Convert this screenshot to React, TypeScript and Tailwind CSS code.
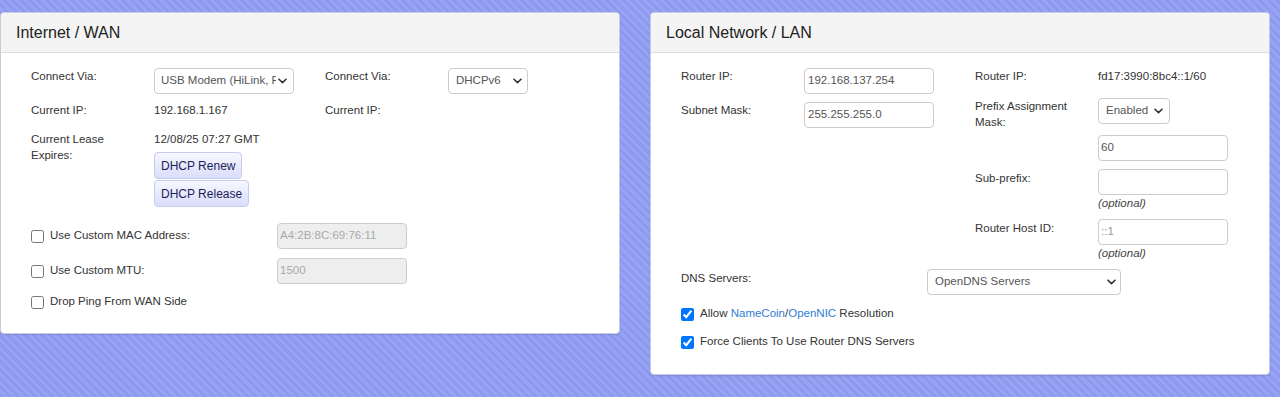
import React from 'react'

const font = "font-['Liberation_Sans',Arial,sans-serif]"

const Chevron: React.FC = () => (
  <svg width="9" height="6" viewBox="0 0 9 6" className="shrink-0">
    <path d="M1 1.2 4.5 4.6 8 1.2" fill="none" stroke="#333" strokeWidth="1.6" strokeLinecap="round" strokeLinejoin="round" />
  </svg>
)

const Select: React.FC<{ value: string; className?: string }> = ({ value, className = '' }) => (
  <div
    className={`flex h-[26px] items-center gap-[2px] rounded-[4px] border border-[#ccc] bg-white pl-[6px] text-[#555] ${className}`}
  >
    <span className="flex-1 overflow-hidden whitespace-nowrap">{value}</span>
    <Chevron />
  </div>
)

const TextInput: React.FC<{ value?: string; disabled?: boolean; muted?: boolean; className?: string }> = ({
  value = '',
  disabled,
  muted,
  className = '',
}) => (
  <div
    className={`flex h-[26px] w-[130px] items-center rounded-[4px] border border-[#ccc] pl-[2px] ${
      disabled ? 'bg-[#eee] text-[#aaa]' : 'bg-white'
    } ${muted ? 'text-[#999]' : disabled ? '' : 'text-[#555]'} ${className}`}
  >
    {value}
  </div>
)

const Checkbox: React.FC<{ checked?: boolean }> = ({ checked }) => (
  <input type="checkbox" readOnly checked={!!checked} className="h-[13px] w-[13px] shrink-0" />
)

const Label: React.FC<{ children?: React.ReactNode }> = ({ children }) => (
  <div className="w-[123px] shrink-0 leading-4 text-[#333]">{children}</div>
)

const Panel: React.FC<{ title: string; children: React.ReactNode }> = ({ title, children }) => (
  <section className="w-[620px] shrink-0 rounded-[4px] border border-[#c9cbe0] bg-white shadow-[0_1px_2px_rgba(0,0,0,0.12)]">
    <h2 className="h-[40px] rounded-t-[4px] border-b border-[#ddd] bg-[#f4f4f4] px-[15px] text-[16px] leading-[39px] text-[#222]">
      {title}
    </h2>
    {children}
  </section>
)

const DhcpButton: React.FC<{ label: string }> = ({ label }) => (
  <button className="h-[27px] rounded-[4px] border border-[#c6cbef] bg-linear-to-b from-[#f6f7fe] to-[#d9defa] px-[6px] text-[12px] text-[#1b1d5a]">
    {label}
  </button>
)

const Optional: React.FC = () => <div className="leading-4 italic text-[#444]">(optional)</div>

export default function App() {
  return (
    <div
      className={`${font} min-h-screen w-full bg-[repeating-linear-gradient(45deg,#8d9af0_0px,#8d9af0_3px,#97a4f2_3px,#97a4f2_6px)] text-[11.5px]`}
    >
      <div className="flex items-start gap-[30px] pt-[12px]">
        {/* WAN */}
        <Panel title="Internet / WAN">
          <div className="px-[15px] pb-[18px] pt-[15px]">
            <div className="grid grid-cols-2">
              <div className="px-[15px]">
                <div className="flex h-[34px] items-start">
                  <Label>Connect Via:</Label>
                  <Select value="USB Modem (HiLink, RNDIS)" className="w-[140px] pr-[6px]" />
                </div>
                <div className="flex h-[29px] items-start">
                  <Label>Current IP:</Label>
                  <div className="leading-4 text-[#333]">192.168.1.167</div>
                </div>
                <div className="flex items-start">
                  <Label>
                    Current Lease
                    <br />
                    Expires:
                  </Label>
                  <div className="flex flex-col items-start">
                    <div className="leading-4 text-[#333]">12/08/25 07:27 GMT</div>
                    <div className="mt-[5px] flex flex-col items-start gap-[1px]">
                      <DhcpButton label="DHCP Renew" />
                      <DhcpButton label="DHCP Release" />
                    </div>
                  </div>
                </div>
              </div>
              <div className="px-[15px]">
                <div className="flex h-[34px] items-start">
                  <Label>Connect Via:</Label>
                  <Select value="DHCPv6" className="w-[80px] pl-[7px] pr-[5px]" />
                </div>
                <div className="flex h-[29px] items-start">
                  <Label>Current IP:</Label>
                </div>
              </div>
            </div>

            <div className="px-[15px]">
              <div className="mt-[16px] flex h-[26px] items-center">
                <label className="flex w-[246px] items-center gap-[6px] text-[#333]">
                  <Checkbox />
                  Use Custom MAC Address:
                </label>
                <TextInput value="A4:2B:8C:69:76:11" disabled />
              </div>
              <div className="mt-[9px] flex h-[26px] items-center">
                <label className="flex w-[246px] items-center gap-[6px] text-[#333]">
                  <Checkbox />
                  Use Custom MTU:
                </label>
                <TextInput value="1500" disabled />
              </div>
              <div className="mt-[5px] flex h-[26px] items-center">
                <label className="flex items-center gap-[6px] text-[#333]">
                  <Checkbox />
                  Drop Ping From WAN Side
                </label>
              </div>
            </div>
          </div>
        </Panel>

        {/* LAN */}
        <Panel title="Local Network / LAN">
          <div className="px-[15px] pb-[24px] pt-[15px]">
            <div className="grid grid-cols-2">
              <div className="px-[15px]">
                <div className="flex h-[34px] items-start">
                  <Label>Router IP:</Label>
                  <TextInput value="192.168.137.254" className="pl-[3px]" />
                </div>
                <div className="flex h-[34px] items-start">
                  <Label>Subnet Mask:</Label>
                  <TextInput value="255.255.255.0" className="pl-[3px]" />
                </div>
              </div>
              <div className="px-[15px]">
                <div className="flex h-[30px] items-start">
                  <Label>Router IP:</Label>
                  <div className="leading-4 text-[#333]">fd17:3990:8bc4::1/60</div>
                </div>
                <div className="flex h-[37px] items-start">
                  <Label>
                    Prefix Assignment
                    <br />
                    Mask:
                  </Label>
                  <Select value="Enabled" className="w-[72px] pl-[7px] pr-[6px]" />
                </div>
                <div className="flex h-[34px] items-start">
                  <Label />
                  <TextInput value="60" />
                </div>
                <div className="flex h-[50px] items-start">
                  <Label>
                    <div className="pt-[1px]">Sub-prefix:</div>
                  </Label>
                  <div>
                    <TextInput />
                    <Optional />
                  </div>
                </div>
                <div className="flex h-[50px] items-start">
                  <Label>
                    <div className="pt-[1px]">Router Host ID:</div>
                  </Label>
                  <div>
                    <TextInput value="::1" muted />
                    <Optional />
                  </div>
                </div>
              </div>
            </div>

            <div className="px-[15px]">
              <div className="flex h-[26px] items-start">
                <div className="w-[246px] pt-[1px] leading-4 text-[#333]">DNS Servers:</div>
                <Select value="OpenDNS Servers" className="w-[194px] pl-[7px] pr-[4px]" />
              </div>
              <div className="mt-[11px] flex h-[16px] items-center gap-[6px] text-[#333]">
                <Checkbox checked />
                <span>
                  Allow <a className="text-[#2f80d6]">NameCoin</a>/<a className="text-[#2f80d6]">OpenNIC</a> Resolution
                </span>
              </div>
              <div className="mt-[12px] flex h-[16px] items-center gap-[6px] text-[#333]">
                <Checkbox checked />
                <span>Force Clients To Use Router DNS Servers</span>
              </div>
            </div>
          </div>
        </Panel>
      </div>
    </div>
  )
}
